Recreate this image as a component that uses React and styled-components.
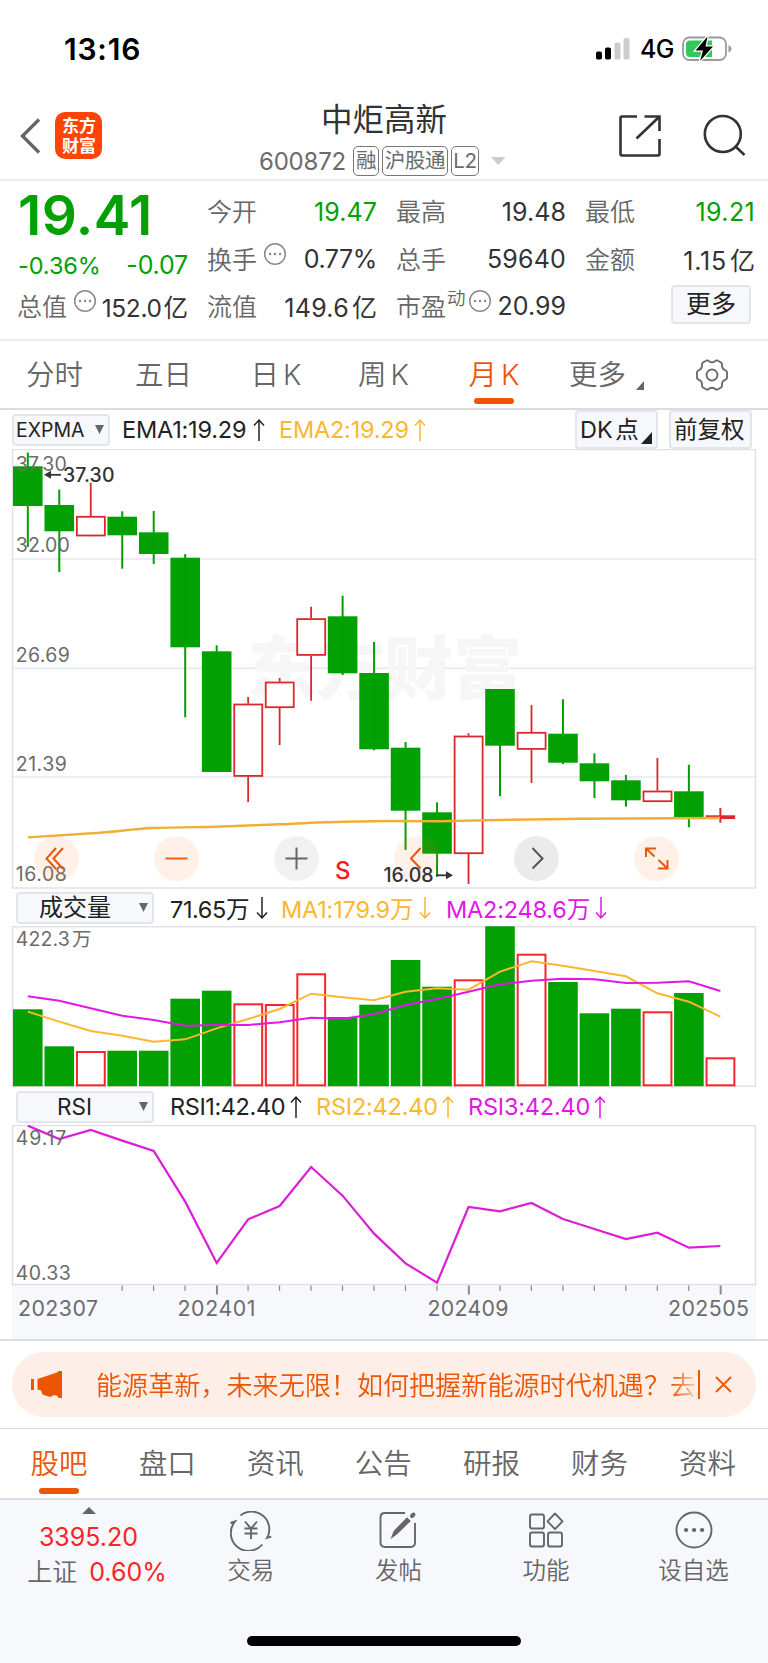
import React from 'react';
import styled, { createGlobalStyle } from 'styled-components';

const GREEN = '#02a002';
const RED = '#d9292c';
const ORANGE = '#ec5603';
const AMBER = '#fdb62f';
const PINK = '#e117e6';

const GlobalStyle = createGlobalStyle`
  * { box-sizing: border-box; }
  body {
    margin: 0;
    background: #fff;
    color: #333;
    font-family: Inter, 'Noto Sans CJK SC', sans-serif;
  }
  svg { display: block; flex: none; }
`;

const Page = styled.div`
  width: 768px;
  height: 1663px;
  overflow: hidden;
  display: flex;
  flex-direction: column;
`;

const Row = styled.div`
  display: flex;
  align-items: center;
`;

const StatusBar = styled(Row)`
  height: 97px;
  padding: 1px 36px 0 64px;
  color: #000;
`;

const Clock = styled.div`
  flex: 1;
  font-size: 30px;
  font-weight: 600;
  letter-spacing: 0.8px;
`;

const Network = styled.div`
  width: 42px;
  margin-left: 10px;
  font-size: 25px;
  font-weight: 500;
  letter-spacing: -0.6px;
`;

const Header = styled.header`
  height: 84px;
  display: grid;
  grid-template-columns: 220px 1fr 220px;
  border-bottom: 2px solid #ececec;
`;

const HeaderLeft = styled.div`
  display: flex;
  gap: 15px;
  padding: 15px 0 0 20px;
`;

const Logo = styled.div`
  width: 47px;
  height: 47px;
  padding: 4px 0 0 1px;
  border-radius: 10px;
  background: #ff4403;
  color: #fff;
  font-size: 17px;
  font-weight: 700;
  line-height: 20px;
  text-align: center;
`;

const HeaderCenter = styled.div`
  display: flex;
  flex-direction: column;
  align-items: center;
`;

const StockName = styled.h1`
  margin: 0;
  height: 46px;
  line-height: 46px;
  font-size: 31.5px;
  font-weight: 400;
`;

const CodeLine = styled(Row)`
  height: 36px;
  margin-left: -3px;
  color: #6b6b6b;
`;

const Code = styled.div`
  width: 94px;
  font-size: 24px;
  letter-spacing: -0.2px;
`;

const Tag = styled.div`
  width: ${(p) => p.$w}px;
  height: 30px;
  margin-right: 3px;
  border: 1.5px solid #777;
  border-radius: 5px;
  font-size: 20.5px;
  line-height: 28px;
  text-align: center;
  white-space: nowrap;
  letter-spacing: -0.4px;
`;

const HeaderRight = styled.div`
  display: flex;
  gap: 41px;
  justify-content: flex-end;
  padding: 17px 22px 0 0;
`;

const Quote = styled.section`
  height: 160px;
  padding: 6px 13px 0 18px;
  display: grid;
  grid-template-columns: 170px repeat(3, 169px);
  grid-template-rows: 48px 47px 47px;
  column-gap: 20px;
  border-bottom: 2px solid #ececec;
`;

const Price = styled.div`
  color: ${GREEN};
  font-size: 55px;
  font-weight: 600;
  line-height: 57px;
  letter-spacing: 0.4px;
  white-space: nowrap;
`;

const Pair = styled(Row)`
  position: relative;
  justify-content: space-between;
  font-size: 25px;
  white-space: nowrap;
  top: ${(p) => p.$drop || 0}px;
`;

const PairLabel = styled.div`
  display: flex;
  margin: 0 0 2px -1px;
  font-weight: 350;
  color: #666;
`;

const PairValue = styled.div`
  margin-top: 1px;
  color: ${(p) => (p.$down ? GREEN : '#333')};
  font-size: ${(p) => p.$size || 25}px;
  letter-spacing: ${(p) => p.$ls ?? 0.35}px;
`;

const Unit = styled.span`
  margin-left: ${(p) => p.$ml}px;
  letter-spacing: 0;
`;

const Sup = styled.span`
  font-size: 18.5px;
  line-height: 22px;
  margin-left: 1px;
`;

const MoreButton = styled.button`
  width: 80px;
  height: 39px;
  padding: 0;
  margin: 0 4px 3px 0;
  border: 2px solid #e3e5ec;
  border-radius: 4px;
  background: #f7f8fb;
  color: #222;
  font: inherit;
  font-size: 25px;
  line-height: 33px;
`;

const PeriodTabs = styled.nav`
  height: 69px;
  display: flex;
  border-bottom: 2px solid #dcdcde;
`;

const PeriodTab = styled.div`
  position: relative;
  width: ${(p) => p.$w}px;
  flex: none;
  display: flex;
  justify-content: center;
  padding-top: 13px;
  font-size: 28.5px;
  font-weight: 350;
  line-height: 41px;
  white-space: nowrap;
  word-spacing: -4px;
  color: ${(p) => (p.$active ? ORANGE : '#666')};
`;

const Underline = styled.i`
  position: absolute;
  left: 50%;
  bottom: ${(p) => p.$b}px;
  width: 40px;
  height: 6px;
  margin-left: -20px;
  border-radius: 3px;
  background: ${ORANGE};
`;

const Legend = styled(Row)`
  height: ${(p) => p.$h}px;
  padding: ${(p) => p.$pad};
  white-space: nowrap;
`;

const Select = styled.div`
  display: flex;
  align-items: center;
  justify-content: space-between;
  width: ${(p) => p.$w}px;
  height: 32px;
  padding: 0 4px 0 ${(p) => p.$left}px;
  margin-right: ${(p) => p.$gap}px;
  border: 2px solid #e3e5ec;
  border-radius: 4px;
  background: #f7f8fb;
  font-size: ${(p) => p.$size}px;
  line-height: 26px;
  color: #222;
`;

const Stat = styled.div`
  display: flex;
  align-items: center;
  justify-content: space-between;
  width: ${(p) => p.$w}px;
  margin-right: ${(p) => p.$gap}px;
  font-size: 23.5px;
  letter-spacing: ${(p) => p.$ls || 0}px;
  color: ${(p) => p.$color};
`;

const ToolButton = styled.div`
  position: relative;
  width: 83px;
  height: 39px;
  margin-left: ${(p) => p.$ml}px;
  padding-left: 3px;
  border: 2px solid #e3e5ec;
  border-radius: 4px;
  background: #f7f8fb;
  color: #222;
  font-size: 23.5px;
  line-height: 35px;
  word-spacing: -4px;
`;

const Corner = styled.i`
  position: absolute;
  right: ${(p) => p.$r}px;
  bottom: ${(p) => p.$b}px;
  border-left: ${(p) => p.$s}px solid transparent;
  border-bottom: ${(p) => p.$s + 1}px solid ${(p) => p.$color};
`;

const ChartBox = styled.div`
  position: relative;
`;

const Controls = styled.div`
  position: absolute;
  left: 34px;
  top: 387px;
  display: flex;
  gap: 75px;
`;

const RoundButton = styled.button`
  width: 45px;
  height: 45px;
  padding: 0;
  border: 0;
  border-radius: 50%;
  background: ${(p) => p.$bg};
`;

const Notice = styled.section`
  height: 90px;
  padding: 11px 12px 0;
  border-top: 2px solid #dcdde3;
  border-bottom: 1px solid #dedede;
`;

const NoticePill = styled(Row)`
  height: 65px;
  padding: 0 24px 0 19px;
  border-radius: 32px;
  background: #fdeee7;
  color: ${ORANGE};
`;

const NoticeText = styled.div`
  width: 602px;
  margin: 0 0 2px 34px;
  white-space: nowrap;
  font-size: 26.1px;
  font-weight: 350;
  mask-image: linear-gradient(to right, #000 576px, transparent 606px);
`;

const NoticeLine = styled.div`
  width: 2px;
  height: 29px;
  margin: 0 15px 0 1px;
  background: ${ORANGE};
`;

const BottomTabs = styled.nav`
  height: 71px;
  padding: 0 5px;
  display: grid;
  grid-template-columns: repeat(7, 108.1px);
  border-bottom: 2px solid #dddee3;
`;

const BottomTab = styled.div`
  position: relative;
  padding-top: 14px;
  font-size: 28.5px;
  font-weight: 350;
  line-height: 41px;
  text-align: center;
  color: ${(p) => (p.$active ? ORANGE : '#666')};
`;

const Footer = styled.footer`
  flex: 1;
  background: #f7f8fb;
`;

const FooterRow = styled.div`
  height: 136px;
  display: grid;
  grid-template-columns: 177px repeat(4, 147.6px);
`;

const IndexCell = styled.div`
  display: flex;
  flex-direction: column;
  align-items: center;
  padding-top: 7px;
  color: #fa2328;
  font-size: 25px;
`;

const IndexLine = styled.div`
  height: ${(p) => p.$h}px;
  line-height: ${(p) => p.$h}px;
  padding-left: ${(p) => p.$left || 0}px;
  white-space: nowrap;
`;

const IndexName = styled.span`
  margin-right: 12px;
  font-weight: 350;
  color: #666;
`;

const Action = styled.div`
  display: flex;
  flex-direction: column;
  align-items: center;
  padding-top: 11px;
  font-size: 23.5px;
  font-weight: 350;
  line-height: 39px;
  color: #666;
`;

const HomeIndicator = styled.div`
  width: 274px;
  height: 10px;
  margin: 0 auto;
  border-radius: 5px;
  background: #000;
`;

// [open/close top, open/close bottom, high, low, rising]
const candles = [
  [466.3, 506, 452.5, 547, 0],
  [505, 531.3, 489.5, 572, 0],
  [516, 536.3, 482.7, 536, 1],
  [516.7, 535.3, 511.3, 568.7, 0],
  [532.3, 554, 511, 564, 0],
  [557.7, 647.3, 554, 717.3, 0],
  [651.3, 772, 645.3, 772, 0],
  [703.7, 776.7, 697, 802, 1],
  [681.7, 708, 678, 745, 1],
  [618.3, 655.7, 606.7, 700.7, 1],
  [616.3, 673.3, 595.7, 675, 0],
  [673, 749.3, 642, 750.3, 0],
  [747.7, 810.7, 742, 850, 0],
  [812.3, 853.7, 802.3, 876.7, 0],
  [735.7, 854, 733.3, 884, 1],
  [689, 745.7, 689, 796.3, 0],
  [732, 749.7, 705, 783, 1],
  [733.7, 762.7, 699.3, 764, 0],
  [763.3, 781.3, 753.3, 798, 0],
  [780.3, 800.3, 775, 806.7, 0],
  [790.7, 802, 758, 802, 1],
  [791.3, 817.3, 764.7, 827.3, 0],
  [815.3, 819, 808, 822.7, 1],
];

const volumes = [
  1009.3, 1046.3, 1051, 1050.7, 1050.7, 998.7, 990.7, 1003.3, 1004, 973.3, 1017, 1004.7,
  960, 986.7, 979.3, 926.3, 953.7, 982, 1013.3, 1008.7, 1011.3, 993, 1057.3,
];

const volMa1 = [
  380, 410, 438, 452, 470, 463, 430, 402, 372, 326, 337, 346, 320, 310, 314, 260, 229, 242,
  258, 274, 325, 350, 395,
];

const volMa2 = [
  334, 347, 370, 392, 405, 422, 420, 420, 412, 398, 401, 388, 360, 342, 320, 298, 287, 281,
  283, 294, 293, 289, 318,
];

const rsi = [
  47, 87, 60, 92, 123, 275, 459, 328, 288, 171, 257, 371, 460, 518, 291, 304, 279, 327, 357,
  387, 368, 413, 408,
];

const cx = (i) => 27.8 + i * 31.48;
const toLine = (list, offset) => list.map((v, i) => `${cx(i)},${v / 3 + offset}`).join(' ');

function AxisText({ y, w, children }) {
  return (
    <text x="15.8" y={y} textLength={w} fontSize="19.5" fill="#6b6b6b">
      {children}
    </text>
  );
}

function Arrow({ down }) {
  return (
    <svg width="12" height="24" viewBox="0 0 12 24" fill="none" stroke="currentColor" strokeWidth="1.5">
      <path d={down ? 'M6 1v21M1 16.5l5 5.5 5-5.5' : 'M6 23V2M1 7.5L6 2l5 5.5'} />
    </svg>
  );
}

function Caret() {
  return (
    <svg width="9" height="9" viewBox="0 0 9 9" fill="#666">
      <path d="M0 0h9L4.5 9z" />
    </svg>
  );
}

const DotsIcon = styled.svg`
  margin: 2px 0 0 ${(p) => p.$ml}px;
`;

function Dots({ ml = 6 }) {
  return (
    <DotsIcon $ml={ml} width="24" height="24" viewBox="0 0 24 24" fill="none" stroke="#888" strokeWidth="1.5">
      <circle cx="12" cy="12" r="10.3" />
      <path d="M7 12h.1M12 12h.1M17 12h.1" strokeWidth="2.4" strokeLinecap="round" />
    </DotsIcon>
  );
}

function Candle({ data, i }) {
  const [top, bottom, high, low, up] = data;
  const x = cx(i);
  if (i === 22) {
    return (
      <g fill={RED}>
        <rect x={x - 14.7} y={top} width="29.5" height={bottom - top} />
        <rect x={x - 1} y={high} width="2" height={low - high} />
      </g>
    );
  }
  if (up) {
    return (
      <g fill="none" stroke={RED} strokeWidth="1.8">
        <path d={`M${x} ${high}V${top}M${x} ${bottom}V${low}`} />
        <rect x={x - 13.9} y={top + 0.8} width="28" height={bottom - top - 1.6} fill="#fff" />
      </g>
    );
  }
  return (
    <g fill={GREEN}>
      <rect x={x - 14.8} y={top} width="29.6" height={bottom - top} />
      <rect x={x - 1} y={high} width="2" height={low - high} />
    </g>
  );
}

function PriceChart() {
  return (
    <svg width="768" height="440" viewBox="0 449 768 440">
      <rect x="12.5" y="449.5" width="743" height="438.5" fill="#fff" stroke="#e2e2e6" strokeWidth="1.5" />
      <path d="M13 559h742M13 668.3h742M13 777h742" stroke="#e6e9f0" strokeWidth="1.7" />
      <text x="247" y="694" fontSize="69" fontWeight="900" fill="#f6f6f6" textLength="275">东方财富</text>
      {candles.map((c, i) => <Candle key={i} data={c} i={i} />)}
      <path
        d="M27.8 837.4C60 835.5 80 833.8 100 832.7S130 829 153 828S200 827.2 217 826.7S260 825 280 824.3S325 822 343 821.8L390 821L440 821.2L513 819.7L580 818.8L720 818"
        fill="none"
        stroke="#efaf35"
        strokeWidth="2.4"
      />
      <AxisText y="470.6" w="51">37.30</AxisText>
      <AxisText y="552.4" w="54">32.00</AxisText>
      <AxisText y="661.8" w="54">26.69</AxisText>
      <AxisText y="771" w="51">21.39</AxisText>
      <AxisText y="880.9" w="51">16.08</AxisText>
      <g fill="#333" stroke="#333" strokeWidth="1.8">
        <path d="M49 474.8h12" />
        <path d="M44 474.8l7-4v8z" stroke="none" />
        <path d="M436 875.3h12" />
        <path d="M453 875.3l-7-4v8z" stroke="none" />
      </g>
      <text x="335" y="879" fontSize="24" fontWeight="500" fill="#fb1b20">S</text>
    </svg>
  );
}

const Marks = styled.svg`
  position: absolute;
  left: 0;
  top: 0;
  pointer-events: none;
`;

function PriceMarks() {
  return (
    <Marks width="768" height="440" viewBox="0 449 768 440" fontSize="19.5" fontWeight="550" fill="#333">
      <text x="63" y="482" textLength="51.5">37.30</text>
      <text x="383.5" y="882.3" textLength="50">16.08</text>
    </Marks>
  );
}

function ControlButtons() {
  const soft = 'rgba(255, 120, 50, 0.11)';
  const icons = [
    [soft, ORANGE, 'M22 12L12.5 22.5L22 33M29 12L19.5 22.5L29 33'],
    [soft, '#f06010', 'M11.5 22.5h22'],
    ['rgba(0, 0, 0, 0.055)', '#666', 'M11.5 22.5h22M22.5 11.5v22'],
    [soft, ORANGE, 'M26.5 12L17 22.5L26.5 32.5'],
    ['rgba(0, 0, 0, 0.08)', '#555', 'M18.5 12L28.5 22.5L18.5 32.5'],
    [soft, ORANGE, 'M12 21V12.5h10M12 12.5l8.5 8M24 32.5h9.5V24M33 32L24.5 24'],
  ];
  return (
    <Controls>
      {icons.map(([bg, color, d]) => (
        <RoundButton key={d} $bg={bg}>
          <svg width="45" height="45" viewBox="0 0 45 45" fill="none" stroke={color} strokeWidth="2">
            <path d={d} />
          </svg>
        </RoundButton>
      ))}
    </Controls>
  );
}

function VolumeChart() {
  return (
    <svg width="768" height="162" viewBox="0 926 768 162">
      <rect x="12.5" y="926.7" width="743" height="159.5" fill="#fff" stroke="#e2e2e6" strokeWidth="1.5" />
      <AxisText y="946.3" w="54">422.3</AxisText>
      <text x="72" y="945.8" fontSize="19.5" fill="#6b6b6b">万</text>
      {volumes.map((top, i) =>
        candles[i][4] ? (
          <rect key={i} x={cx(i) - 13.8} y={top + 1} width="27.8" height={1085 - top - 0.7} fill="#fff" stroke="#f8252a" strokeWidth="2" />
        ) : (
          <rect key={i} x={cx(i) - 14.8} y={top} width="29.6" height={1086.2 - top} fill={GREEN} />
        )
      )}
      <polyline points={toLine(volMa1, 885)} fill="none" stroke={AMBER} strokeWidth="2" />
      <polyline points={toLine(volMa2, 885)} fill="none" stroke={PINK} strokeWidth="2" />
    </svg>
  );
}

function RsiChart() {
  const dates = [[18, 80, '202307'], [177.5, 78, '202401'], [427.5, 81, '202409'], [668, 81, '202505']];
  return (
    <svg width="768" height="214" viewBox="0 1125 768 214">
      <rect x="12" y="1285" width="744" height="54" fill="#f7f8fb" />
      <rect x="12.5" y="1125.5" width="743" height="159" fill="#fff" stroke="#e0e0e4" strokeWidth="1.5" />
      <polyline points={toLine(rsi, 1110)} fill="none" stroke="#dc1cd6" strokeWidth="2.2" />
      <AxisText y="1144.8" w="50.5">49.17</AxisText>
      <AxisText y="1280.3" w="55">40.33</AxisText>
      {rsi.map((v, i) =>
        i > 2 ? (
          <rect
            key={i}
            x={cx(i) - 0.7}
            y="1285.5"
            width={i % 8 === 6 ? 2 : 1.2}
            height={i % 8 === 6 ? 9 : 5.5}
            fill="#8a8a8a"
          />
        ) : null
      )}
      {dates.map(([x, w, label]) => (
        <text key={label} x={x} y="1315.8" textLength={w} fontSize="21.3" fill="#6b6b6b">{label}</text>
      ))}
    </svg>
  );
}

const actions = [
  ['交易', (
    <g key="t">
      <path d="M10.500 4.500A17.700 17.700 0 0 1 37 27L41.300 25.700" />
      <path d="M32.300 33.500A17.700 17.700 0 0 1 5 10.500L0.500 12" />
      <path d="M15 10.500l6 7 6-7M21 17.500v10.500M14.500 17.500h13M14.500 22.500h13" />
    </g>
  )],
  ['发帖', (
    <g key="p">
      <path d="M28 2H8Q3.500 2 3.500 6.500V31.500Q3.500 36 8 36H33.500Q38 36 38 31.500V12" />
      <path d="M15.500 25.500L17.500 20.500L30 7.500L32.500 10L19.500 22.500z" fill="#666" />
      <path d="M35 5l1.500-1.500" strokeWidth="4" strokeLinecap="round" />
    </g>
  )],
  ['功能', (
    <g key="f">
      <rect x="5" y="3.500" width="14" height="14" rx="2" />
      <rect x="5" y="21.500" width="14" height="14" rx="2" />
      <rect x="23" y="21.500" width="14" height="14" rx="2" />
      <path d="M30 2.500l7.500 7.800-7.500 7.800-7.500-7.800z" strokeLinejoin="round" />
    </g>
  )],
  ['设自选', (
    <g key="s">
      <circle cx="21" cy="19" r="17.500" />
      <path d="M13 19h.1M21 19h.1M29 19h.1" strokeWidth="4.200" strokeLinecap="round" />
    </g>
  )],
];

export default function App() {
  return (
    <Page>
      <GlobalStyle />
      <StatusBar>
        <Clock>13:16</Clock>
        <svg width="34" height="22" viewBox="0 0 34 22">
          <rect x="0" y="13.500" width="6" height="8" rx="1.800" />
          <rect x="9" y="9.500" width="6" height="12" rx="1.800" />
          <rect x="18.500" y="4.500" width="6" height="17" rx="1.800" fill="#ccc" />
          <rect x="27.500" y="0" width="6" height="21.500" rx="1.800" fill="#ccc" />
        </svg>
        <Network>4G</Network>
        <svg width="50" height="26" viewBox="0 0 50 26">
          <rect x="1" y="1.500" width="43" height="22.500" rx="6.500" fill="#fff" stroke="#9a9a9a" strokeWidth="1.800" />
          <path d="M8 4.500H30V21H8Q4 21 4 17V8.500Q4 4.500 8 4.500z" fill="#34c759" />
          <path d="M46.500 9Q49.500 10.500 49.500 12.800T46.500 16.500z" fill="#999" />
          <path d="M25.500 0.500L13.500 14.500H21L18 25L31 10.500H23.500z" stroke="#fff" strokeWidth="2.500" paintOrder="stroke" />
        </svg>
      </StatusBar>

      <Header>
        <HeaderLeft>
          <svg width="20" height="48" viewBox="0 0 20 48" fill="none" stroke="#666" strokeWidth="3.400">
            <path d="M19 7.500L2.500 24L19 40.500" />
          </svg>
          <Logo>东方<br />财富</Logo>
        </HeaderLeft>
        <HeaderCenter>
          <StockName>中炬高新</StockName>
          <CodeLine>
            <Code>600872</Code>
            <Tag $w={26}>融</Tag>
            <Tag $w={66}>沪股通</Tag>
            <Tag $w={28}>L2</Tag>
            <svg width="24" height="8" viewBox="0 0 24 8" fill="#ccc">
              <path d="M9 0h14.500L16.200 8z" />
            </svg>
          </CodeLine>
        </HeaderCenter>
        <HeaderRight>
          <svg width="44" height="44" viewBox="0 0 44 44" fill="none" stroke="#333" strokeWidth="2.600">
            <path d="M19 2.500H4Q2.500 2.500 2.500 4V40Q2.500 41.500 4 41.500H40Q41.500 41.500 41.500 40V25M26.500 2.500H41.500V17M41 3L18.500 24.500" />
          </svg>
          <svg width="43" height="44" viewBox="0 0 43 44" fill="none" stroke="#333" strokeWidth="2.600">
            <circle cx="19.800" cy="20" r="18" />
            <path d="M32.500 32.500L41.500 41" />
          </svg>
        </HeaderRight>
      </Header>

      <Quote>
        <Price>19.41</Price>
        <Pair><PairLabel>今开</PairLabel><PairValue $down $ls={0.1}>19.47</PairValue></Pair>
        <Pair><PairLabel>最高</PairLabel><PairValue $ls={0.1}>19.48</PairValue></Pair>
        <Pair><PairLabel>最低</PairLabel><PairValue $down>19.21</PairValue></Pair>

        <Pair $drop={6}>
          <PairValue $down $size={23.5} $ls={-0.1}>-0.36%</PairValue>
          <PairValue $down $ls={-0.2}>-0.07</PairValue>
        </Pair>
        <Pair><PairLabel>换手<Dots /></PairLabel><PairValue $ls={-0.4}>0.77%</PairValue></Pair>
        <Pair><PairLabel>总手</PairLabel><PairValue $ls={0.2}>59640</PairValue></Pair>
        <Pair><PairLabel>金额</PairLabel><PairValue $ls={0.8}>1.15<Unit $ml={3}>亿</Unit></PairValue></Pair>

        <Pair><PairLabel>总值<Dots /></PairLabel><PairValue $size={24.5} $ls={-0.4}>152.0<Unit $ml={2}>亿</Unit></PairValue></Pair>
        <Pair><PairLabel>流值</PairLabel><PairValue $ls={0.3}>149.6<Unit $ml={3}>亿</Unit></PairValue></Pair>
        <Pair><PairLabel>市盈<Sup>动</Sup><Dots ml={2} /></PairLabel><PairValue $ls={0}>20.99</PairValue></Pair>
        <Row style={{ justifyContent: 'flex-end' }}><MoreButton>更多</MoreButton></Row>
      </Quote>

      <PeriodTabs>
        <PeriodTab $w={109}>分时</PeriodTab>
        <PeriodTab $w={109}>五日</PeriodTab>
        <PeriodTab $w={116}>日 K</PeriodTab>
        <PeriodTab $w={99}>周 K</PeriodTab>
        <PeriodTab $w={122} $active>月 K<Underline $b={4} /></PeriodTab>
        <PeriodTab $w={85}>更多<Corner $r={-4} $b={18} $s={8} $color="#666" /></PeriodTab>
        <PeriodTab $w={127}>
          <svg width="50" height="34" viewBox="-16 0 50 34" fill="none" stroke="#6b6b6b" strokeWidth="1.900" style={{ marginTop: 4 }}>
            <path d="M11.500 2.500Q13 2 14 3.200Q17 5.500 20 3.200Q21 2 22.500 2.500L26 4.500Q27.300 5.500 27 7Q26.800 11 30.500 12.300Q32 12.800 32 14.500V19.500Q32 21.200 30.500 21.700Q26.800 23 27 27Q27.300 28.500 26 29.500L22.500 31.500Q21 32 20 30.800Q17 28.500 14 30.800Q13 32 11.500 31.500L8 29.500Q6.700 28.500 7 27Q7.200 23 3.500 21.700Q2 21.200 2 19.500V14.500Q2 12.800 3.500 12.300Q7.200 11 7 7Q6.700 5.500 8 4.500z" />
            <circle cx="17" cy="17" r="5.500" />
          </svg>
        </PeriodTab>
      </PeriodTabs>

      <Legend $h={39} $pad="0 16px 0 12px">
        <Select $w={98} $left={2} $gap={12} $size={19.5}>EXPMA<Caret /></Select>
        <Stat $w={143} $gap={14} $color="#222" $ls={-0.2}>EMA1:19.29<Arrow /></Stat>
        <Stat $w={147} $gap={0} $color={AMBER} $ls={-0.2}>EMA2:19.29<Arrow /></Stat>
        <ToolButton $ml={149}>DK 点<Corner $r={4} $b={3} $s={11} $color="#222" /></ToolButton>
        <ToolButton $ml={11}>前复权</ToolButton>
      </Legend>

      <ChartBox>
        <PriceChart />
        <ControlButtons />
        <PriceMarks />
      </ChartBox>

      <Legend $h={37} $pad="0 0 0 16px">
        <Select $w={138} $left={21} $gap={16} $size={24}>成交量<Caret /></Select>
        <Stat $w={98} $gap={13} $color="#222" $ls={-0.4}>71.65万<Arrow down /></Stat>
        <Stat $w={150} $gap={15} $color={AMBER} $ls={-0.2}>MA1:179.9万<Arrow down /></Stat>
        <Stat $w={161} $gap={0} $color={PINK} $ls={-0.2}>MA2:248.6万<Arrow down /></Stat>
      </Legend>
      <VolumeChart />

      <Legend $h={37} $pad="0 0 0 16px">
        <Select $w={138} $left={39} $gap={16} $size={22.5}>RSI<Caret /></Select>
        <Stat $w={132} $gap={14} $color="#222" $ls={-0.4}>RSI1:42.40<Arrow /></Stat>
        <Stat $w={138} $gap={14} $color={AMBER} $ls={-0.2}>RSI2:42.40<Arrow /></Stat>
        <Stat $w={138} $gap={0} $color={PINK} $ls={-0.2}>RSI3:42.40<Arrow /></Stat>
      </Legend>
      <RsiChart />

      <Notice>
        <NoticePill>
          <svg width="31" height="27" viewBox="0 0 31 27" fill={ORANGE}>
            <path d="M0 8h3v11H0zM6.500 8L26 1.500L27.500 0H31V27H28L25.500 24.500L22.500 24Q21 26.500 17.500 25.500L11.500 23.500L10 19.500L6.500 18.500z" />
          </svg>
          <NoticeText>能源革新，未来无限！如何把握新能源时代机遇？去</NoticeText>
          <NoticeLine />
          <svg width="17" height="17" viewBox="0 0 17 17" stroke={ORANGE} strokeWidth="1.800">
            <path d="M1 1l15 15M16 1L1 16" />
          </svg>
        </NoticePill>
      </Notice>

      <BottomTabs>
        {['股吧', '盘口', '资讯', '公告', '研报', '财务', '资料'].map((name, i) => (
          <BottomTab key={name} $active={i === 0}>
            {name}
            {i === 0 && <Underline $b={4} />}
          </BottomTab>
        ))}
      </BottomTabs>

      <Footer>
        <FooterRow>
          <IndexCell>
            <svg width="14" height="7" viewBox="0 0 14 7" fill="#666"><path d="M0 7L7 0l7 7z" /></svg>
            <IndexLine $h={47}>3395.20</IndexLine>
            <IndexLine $h={22} $left={17}><IndexName>上证</IndexName>0.60%</IndexLine>
          </IndexCell>
          {actions.map(([name, icon]) => (
            <Action key={name}>
              <svg width="42" height="40" viewBox="0 0 42 40" fill="none" stroke="#666" strokeWidth="1.900">{icon}</svg>
              {name}
            </Action>
          ))}
        </FooterRow>
        <HomeIndicator />
      </Footer>
    </Page>
  );
}
